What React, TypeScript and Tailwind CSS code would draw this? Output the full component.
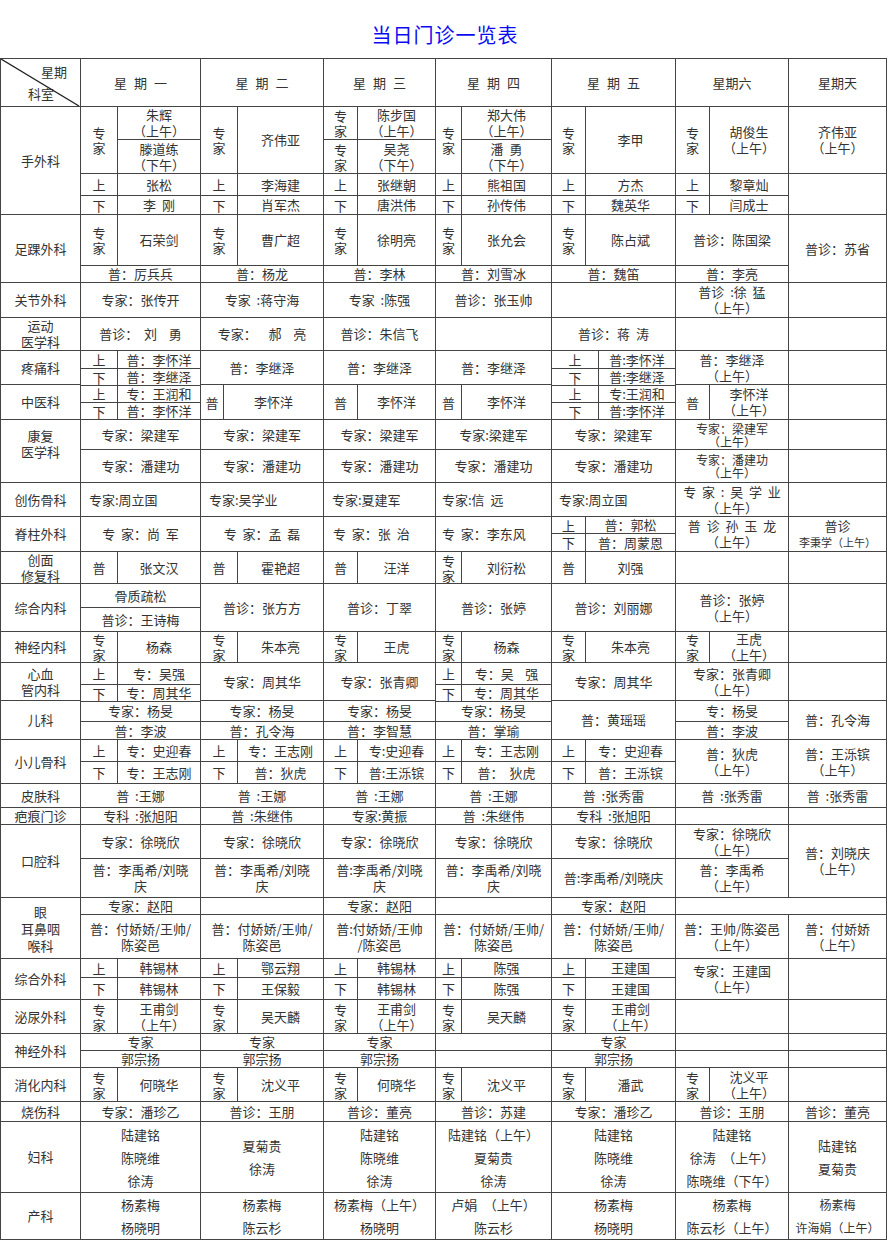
import React from 'react';

type Kids = { children?: React.ReactNode; className?: string };

// day column widths (Mon..Sun) and the narrow label column inside each day
const W = ['w-[120px]', 'w-[123px]', 'w-[112px]', 'w-[116px]', 'w-[124px]', 'w-[113px]', 'w-[98px]'];
const LW = ['w-[37px]', 'w-[37px]', 'w-[34px]', 'w-[26px]', 'w-[34px]', 'w-[34px]'];
const ZJ = '专\n家';
const AM = '（上午）';

function Box({ children, className = '' }: Kids) {
  const j = className.includes('justify-') ? '' : 'justify-center';
  return (
    <div className={`flex shrink-0 items-center ${j} border-r border-b border-[#444] text-center whitespace-pre-wrap ${className}`}>
      {children}
    </div>
  );
}

function Col({ d, w, children }: { d: number; w?: string; children?: React.ReactNode }) {
  return <div className={`flex h-full shrink-0 flex-col ${w ?? W[d]}`}>{children}</div>;
}

function Pair({ lw, h = 'flex-1', label, children, className = '' }: Kids & { lw: string; h?: string; label: string }) {
  return (
    <div className={`flex w-full shrink-0 ${h}`}>
      <Box className={`${lw} h-full leading-[15px]`}>{label}</Box>
      <Box className={`h-full flex-1 ${className}`}>{children}</Box>
    </div>
  );
}

// whole day in one cell
function T({ d, children, className = '' }: Kids & { d: number }) {
  return <Box className={`${W[d]} h-full ${className}`}>{children}</Box>;
}

// label | name
function ZN({ d, label = ZJ, lw, children }: Kids & { d: number; label?: string; lw?: string }) {
  return (
    <Col d={d}>
      <Pair lw={lw ?? LW[d]} h="h-full" label={label}>
        {children}
      </Pair>
    </Col>
  );
}

// 上 / 下 halves
function UD({ d, th, up, down, lw }: { d: number; th: string; up: React.ReactNode; down: React.ReactNode; lw?: string }) {
  const l = lw ?? LW[d];
  return (
    <Col d={d}>
      <Pair lw={l} h={th} label="上">{up}</Pair>
      <Pair lw={l} label="下">{down}</Pair>
    </Col>
  );
}

// two stacked cells
function S2({ d, th, up, down, className = '' }: { d: number; th: string; up?: React.ReactNode; down?: React.ReactNode; className?: string }) {
  return (
    <Col d={d}>
      <Box className={`w-full ${th} ${className}`}>{up}</Box>
      <Box className={`w-full flex-1 ${className}`}>{down}</Box>
    </Col>
  );
}

function Row({ h, name, nameClass = '', children }: { h: string; name: string; nameClass?: string; children?: React.ReactNode }) {
  return (
    <div className={`flex ${h}`}>
      <Box className={`h-full w-[80px] ${nameClass}`}>{name}</Box>
      {children}
    </div>
  );
}

export default function App() {
  return (
    <div className="min-h-[1259px] w-[890px] bg-white font-['Noto_Sans_CJK_SC',sans-serif] text-[13px] leading-[16px] text-[#333]">
      <div className="flex h-[58px] items-center justify-center pt-[12px] text-[20px] tracking-[1px] text-[#0b0bf2]">
        当日门诊一览表
      </div>

      <div className="w-[887px] border-t border-l border-[#444]">
        {/* header */}
        <div className="flex h-[48px]">
          <div className="relative flex h-full w-[80px] shrink-0 flex-col justify-between border-r border-b border-[#444] pt-[5px] pb-[4px]">
            <svg className="absolute inset-0 h-full w-full" viewBox="0 0 79 47" preserveAspectRatio="none">
              <line x1="0" y1="0" x2="78" y2="47" stroke="#222" strokeWidth="1.3" />
            </svg>
            <span className="self-end pr-[13px]">星期</span>
            <span className="self-start pl-[27px]">科室</span>
          </div>
          {['星期一', '星期二', '星期三', '星期四', '星期五'].map((t, i) => (
            <T key={t} d={i} className="pl-[7px] tracking-[7px]">
              {t}
            </T>
          ))}
          <T d={5}>星期六</T>
          <T d={6}>星期天</T>
        </div>

        {/* 手外科 */}
        <Row h="h-[108px]" name="手外科">
          <Col d={0}>
            <div className="flex h-[67px] w-full shrink-0">
              <Box className={`${LW[0]} h-full leading-[15px]`}>{ZJ}</Box>
              <div className="flex flex-1 flex-col">
                <Box className="h-[33px] w-full">{'朱辉\n（上午）'}</Box>
                <Box className="w-full flex-1">{'滕道练\n（下午）'}</Box>
              </div>
            </div>
            <Pair lw={LW[0]} h="h-[22px]" label="上">张松</Pair>
            <Pair lw={LW[0]} label="下">{'李  刚'}</Pair>
          </Col>
          <Col d={1}>
            <Pair lw={LW[1]} h="h-[67px]" label={ZJ}>齐伟亚</Pair>
            <Pair lw={LW[1]} h="h-[22px]" label="上">李海建</Pair>
            <Pair lw={LW[1]} label="下">肖军杰</Pair>
          </Col>
          <Col d={2}>
            <Pair lw={LW[2]} h="h-[33px]" label={ZJ}>{'陈步国\n（上午）'}</Pair>
            <Pair lw={LW[2]} h="h-[34px]" label={ZJ}>{'吴尧\n（下午）'}</Pair>
            <Pair lw={LW[2]} h="h-[22px]" label="上">张继朝</Pair>
            <Pair lw={LW[2]} label="下">唐洪伟</Pair>
          </Col>
          <Col d={3}>
            <div className="flex h-[67px] w-full shrink-0">
              <Box className={`${LW[3]} h-full leading-[15px]`}>{ZJ}</Box>
              <div className="flex flex-1 flex-col">
                <Box className="h-[33px] w-full">{'郑大伟\n（上午）'}</Box>
                <Box className="w-full flex-1">{'潘  勇\n（下午）'}</Box>
              </div>
            </div>
            <Pair lw={LW[3]} h="h-[22px]" label="上">熊祖国</Pair>
            <Pair lw={LW[3]} label="下">孙传伟</Pair>
          </Col>
          <Col d={4}>
            <Pair lw={LW[4]} h="h-[67px]" label={ZJ}>李甲</Pair>
            <Pair lw={LW[4]} h="h-[22px]" label="上">方杰</Pair>
            <Pair lw={LW[4]} label="下">魏英华</Pair>
          </Col>
          <Col d={5}>
            <Pair lw={LW[5]} h="h-[67px]" label={ZJ}>{'胡俊生\n（上午）'}</Pair>
            <Pair lw={LW[5]} h="h-[22px]" label="上">黎章灿</Pair>
            <Pair lw={LW[5]} label="下">闫成士</Pair>
          </Col>
          <Col d={6}>
            <Box className="h-[67px] w-full">{'齐伟亚\n（上午）'}</Box>
            <Box className="w-full flex-1" />
          </Col>
        </Row>

        {/* 足踝外科 */}
        <Row h="h-[68px]" name="足踝外科">
          {[
            ['石荣剑', '普：厉兵兵'],
            ['曹广超', '普：杨龙'],
            ['徐明亮', '普：李林'],
            ['张允会', '普：刘雪冰'],
            ['陈占斌', '普：魏笛'],
          ].map(([a, b], i) => (
            <Col key={a} d={i}>
              <Pair lw={LW[i]} h="h-[51px]" label={ZJ}>{a}</Pair>
              <Box className="w-full flex-1">{b}</Box>
            </Col>
          ))}
          <S2 d={5} th="h-[51px]" up="普诊：陈国梁" down="普：李亮" />
          <T d={6}>普诊：苏省</T>
        </Row>

        {/* 关节外科 */}
        <Row h="h-[35px]" name="关节外科">
          {['专家：张传开', '专家  :蒋守海', '专家  :陈强', '普诊：张玉帅', '', '普诊  :徐  猛\n（上午）', ''].map((t, i) => (
            <T key={i} d={i}>{t}</T>
          ))}
        </Row>

        {/* 运动医学科 */}
        <Row h="h-[33px]" name={'运动\n医学科'}>
          {['普诊：  刘    勇', '专家：    郝    亮', '普诊：朱信飞', '', '普诊：蒋  涛', '', ''].map((t, i) => (
            <T key={i} d={i}>{t}</T>
          ))}
        </Row>

        {/* 疼痛科 */}
        <Row h="h-[34px]" name="疼痛科">
          <UD d={0} th="h-[18px]" up="普：李怀洋" down="普：李继泽" />
          <T d={1}>普：李继泽</T>
          <T d={2}>普：李继泽</T>
          <T d={3}>普：李继泽</T>
          <UD d={4} th="h-[18px]" lw="w-[47px]" up="普:李怀洋" down="普:李继泽" />
          <T d={5}>{'普：李继泽\n（上午）'}</T>
          <T d={6} />
        </Row>

        {/* 中医科 */}
        <Row h="h-[35px]" name="中医科">
          <UD d={0} th="h-[18px]" up="专：王润和" down="普：李怀洋" />
          <ZN d={1} lw="w-[23px]" label="普">李怀洋</ZN>
          <ZN d={2} label="普">李怀洋</ZN>
          <ZN d={3} label="普">李怀洋</ZN>
          <UD d={4} th="h-[18px]" lw="w-[47px]" up="专:王润和" down="普:李怀洋" />
          <ZN d={5} label="普">{'李怀洋\n（上午）'}</ZN>
          <T d={6} />
        </Row>

        {/* 康复医学科 */}
        <Row h="h-[63px]" name={'康复\n医学科'} nameClass="pb-[14px]">
          {['专家：梁建军', '专家：梁建军', '专家：梁建军', '专家:梁建军', '专家：梁建军'].map((t, i) => (
            <S2 key={i} d={i} th="h-[30px]" up={t} down="专家：潘建功" />
          ))}
          <S2 d={5} th="h-[30px]" className="text-[12px] leading-[13px]" up={'专家：梁建军\n（上午）'} down={'专家：潘建功\n（上午）'} />
          <S2 d={6} th="h-[30px]" />
        </Row>

        {/* 创伤骨科 */}
        <Row h="h-[34px]" name="创伤骨科">
          <T d={0} className="justify-start pl-[8px]">专家:周立国</T>
          <T d={1} className="justify-start pl-[8px]">专家:吴学业</T>
          <T d={2} className="justify-start pl-[8px]">专家:夏建军</T>
          <T d={3} className="justify-start pl-[6px]">{'专家:信  远'}</T>
          <T d={4} className="justify-start pl-[7px]">专家:周立国</T>
          <T d={5}>{'专  家  :  吴  学  业\n（上午）'}</T>
          <T d={6} />
        </Row>

        {/* 脊柱外科 */}
        <Row h="h-[35px]" name="脊柱外科">
          <T d={0}>{'专  家：尚  军'}</T>
          <T d={1}>{'专  家：孟  磊'}</T>
          <T d={2} className="justify-start pl-[9px]">{'专  家：张  治'}</T>
          <T d={3} className="justify-start pl-[6px]">{'专  家：李东风'}</T>
          <UD d={4} th="h-[17px]" up="普：郭松" down="普：周蒙恩" />
          <T d={5}>{'普  诊  孙  玉  龙\n（上午）'}</T>
          <T d={6}>
            <span className="flex flex-col">
              <span>普诊</span>
              <span className="text-[11px]">李秉学（上午）</span>
            </span>
          </T>
        </Row>

        {/* 创面修复科 */}
        <Row h="h-[32px]" name={'创面\n修复科'}>
          <ZN d={0} label="普">张文汉</ZN>
          <ZN d={1} label="普">霍艳超</ZN>
          <ZN d={2} label="普">汪洋</ZN>
          <ZN d={3}>刘衍松</ZN>
          <ZN d={4} label="普">刘强</ZN>
          <T d={5} />
          <T d={6} />
        </Row>

        {/* 综合内科 */}
        <Row h="h-[48px]" name="综合内科">
          <S2 d={0} th="h-[24px]" up="骨质疏松" down="普诊：王诗梅" />
          <T d={1}>普诊：张方方</T>
          <T d={2}>普诊：丁翠</T>
          <T d={3}>普诊：张婷</T>
          <T d={4}>普诊：刘丽娜</T>
          <T d={5}>{'普诊：张婷\n（上午）'}</T>
          <T d={6} />
        </Row>

        {/* 神经内科 */}
        <Row h="h-[31px]" name="神经内科">
          {['杨森', '朱本亮', '王虎', '杨森', '朱本亮', '王虎\n（上午）'].map((t, i) => (
            <ZN key={i} d={i}>{t}</ZN>
          ))}
          <T d={6} />
        </Row>

        {/* 心血管内科 */}
        <Row h="h-[38px]" name={'心血\n管内科'}>
          <UD d={0} th="h-[22px]" up="专：吴强" down="专：周其华" />
          <T d={1}>专家：周其华</T>
          <T d={2}>专家：张青卿</T>
          <UD d={3} th="h-[22px]" up={'专：吴    强'} down="专：周其华" />
          <T d={4}>专家：周其华</T>
          <T d={5}>{'专家：张青卿\n（上午）'}</T>
          <T d={6} />
        </Row>

        {/* 儿科 */}
        <Row h="h-[39px]" name="儿科">
          <S2 d={0} th="h-[21px]" up="专家：杨旻" down="普：李波" />
          <S2 d={1} th="h-[21px]" up="专家：杨旻" down="普：孔令海" />
          <S2 d={2} th="h-[21px]" up="专家：杨旻" down="普：李智慧" />
          <S2 d={3} th="h-[21px]" up="专家：杨旻" down="普：掌瑜" />
          <T d={4}>普：黄瑶瑶</T>
          <S2 d={5} th="h-[21px]" up="专：杨旻" down="普：李波" />
          <T d={6}>普：孔令海</T>
        </Row>

        {/* 小儿骨科 */}
        <Row h="h-[44px]" name="小儿骨科">
          <UD d={0} th="h-[22px]" up="专：史迎春" down="专：王志刚" />
          <UD d={1} th="h-[22px]" up="专：王志刚" down="普：狄虎" />
          <UD d={2} th="h-[22px]" up="专:史迎春" down="普:王泺镔" />
          <UD d={3} th="h-[22px]" up="专：王志刚" down={'普：  狄虎'} />
          <UD d={4} th="h-[22px]" up="专：史迎春" down="普：王泺镔" />
          <T d={5}>{'普：狄虎\n（上午）'}</T>
          <T d={6}>{'普：王泺镔\n（上午）'}</T>
        </Row>

        {/* 皮肤科 */}
        <Row h="h-[24px]" name="皮肤科">
          {['普  :王娜', '普  :王娜', '普  :王娜', '普  :王娜', '普  :张秀雷', '普  :张秀雷', '普  :张秀雷'].map((t, i) => (
            <T key={i} d={i}>{t}</T>
          ))}
        </Row>

        {/* 疤痕门诊 */}
        <Row h="h-[17px]" name="疤痕门诊">
          {['专科  :张旭阳', '普  :朱继伟', '专家:黄振', '普  :朱继伟', '专科  :张旭阳', '', ''].map((t, i) => (
            <T key={i} d={i}>{t}</T>
          ))}
        </Row>

        {/* 口腔科 */}
        <Row h="h-[73px]" name="口腔科">
          <S2 d={0} th="h-[34px]" up="专家：徐晓欣" down={'普：李禹希/刘晓\n庆'} />
          <S2 d={1} th="h-[34px]" up="专家：徐晓欣" down={'普：李禹希/刘晓\n庆'} />
          <S2 d={2} th="h-[34px]" up="专家：徐晓欣" down={'普:李禹希/刘晓\n庆'} />
          <S2 d={3} th="h-[34px]" up="专家：徐晓欣" down={'普：李禹希/刘晓\n庆'} />
          <S2 d={4} th="h-[34px]" up="专家：徐晓欣" down="普:李禹希/刘晓庆" />
          <S2 d={5} th="h-[34px]" up={'专家：徐晓欣\n' + AM} down={'普：李禹希\n' + AM} />
          <T d={6}>{'普：刘晓庆\n' + AM}</T>
        </Row>

        {/* 眼耳鼻咽喉科 */}
        <Row h="h-[61px]" name={'眼\n耳鼻咽\n喉科'} nameClass="leading-[17px]">
          <S2 d={0} th="h-[17px]" up="专家：赵阳" down={'普：付娇娇/王帅/\n陈姿邑'} />
          <S2 d={1} th="h-[17px]" down={'普：付娇娇/王帅/\n陈姿邑'} />
          <S2 d={2} th="h-[17px]" up="专家：赵阳" down={'普:付娇娇/王帅\n/陈姿邑'} />
          <S2 d={3} th="h-[17px]" down={'普：付娇娇/王帅/\n陈姿邑'} />
          <S2 d={4} th="h-[17px]" up="专家：赵阳" down={'普：付娇娇/王帅/\n陈姿邑'} />
          <Col d={5} w="w-[211px]">
            <Box className="h-[17px] w-full" />
            <div className="flex w-full flex-1">
              <Box className={`${W[5]} h-full`}>{'普：王帅/陈姿邑\n' + AM}</Box>
              <Box className={`${W[6]} h-full`}>{'普：付娇娇\n' + AM}</Box>
            </div>
          </Col>
        </Row>

        {/* 综合外科 */}
        <Row h="h-[41px]" name="综合外科">
          <UD d={0} th="h-[19px]" up="韩锡林" down="韩锡林" />
          <UD d={1} th="h-[19px]" up="鄂云翔" down="王保毅" />
          <UD d={2} th="h-[19px]" up="韩锡林" down="韩锡林" />
          <UD d={3} th="h-[19px]" up="陈强" down="陈强" />
          <UD d={4} th="h-[19px]" up="王建国" down="王建国" />
          <T d={5}>{'专家：王建国\n' + AM}</T>
          <T d={6} />
        </Row>

        {/* 泌尿外科 */}
        <Row h="h-[34px]" name="泌尿外科">
          {['王甫剑\n（上午）', '吴天麟', '王甫剑\n（上午）', '吴天麟', '王甫剑\n（上午）'].map((t, i) => (
            <ZN key={i} d={i}>{t}</ZN>
          ))}
          <T d={5} />
          <T d={6} />
        </Row>

        {/* 神经外科 */}
        <Row h="h-[34px]" name="神经外科">
          <S2 d={0} th="h-[17px]" up="专家" down="郭宗扬" />
          <S2 d={1} th="h-[17px]" up="专家" down="郭宗扬" />
          <S2 d={2} th="h-[17px]" up="专家" down="郭宗扬" />
          <S2 d={3} th="h-[17px]" />
          <S2 d={4} th="h-[17px]" up="专家" down="郭宗扬" />
          <S2 d={5} th="h-[17px]" />
          <S2 d={6} th="h-[17px]" />
        </Row>

        {/* 消化内科 */}
        <Row h="h-[34px]" name="消化内科">
          {['何晓华', '沈义平', '何晓华', '沈义平', '潘武', '沈义平\n（上午）'].map((t, i) => (
            <ZN key={i} d={i}>{t}</ZN>
          ))}
          <T d={6} />
        </Row>

        {/* 烧伤科 */}
        <Row h="h-[20px]" name="烧伤科">
          {['专家：潘珍乙', '普诊：王朋', '普诊：董亮', '普诊：苏建', '专家：潘珍乙', '普诊：王朋', '普诊：董亮'].map((t, i) => (
            <T key={i} d={i}>{t}</T>
          ))}
        </Row>

        {/* 妇科 */}
        <Row h="h-[71px]" name="妇科">
          {[
            '陆建铭\n陈晓维\n徐涛',
            '夏菊贵\n徐涛',
            '陆建铭\n陈晓维\n徐涛',
            '陆建铭（上午）\n夏菊贵\n徐涛',
            '陆建铭\n陈晓维\n徐涛',
            '陆建铭\n徐涛　（上午）\n陈晓维（下午）',
            '陆建铭\n夏菊贵',
          ].map((t, i) => (
            <T key={i} d={i} className="leading-[23px]">{t}</T>
          ))}
        </Row>

        {/* 产科 */}
        <Row h="h-[47px]" name="产科">
          {[
            '杨素梅\n杨晓明',
            '杨素梅\n陈云杉',
            '杨素梅（上午）\n杨晓明',
            '卢娟　（上午）\n陈云杉',
            '杨素梅\n杨晓明',
            '杨素梅\n陈云杉（上午）',
          ].map((t, i) => (
            <T key={i} d={i} className="leading-[23px]">{t}</T>
          ))}
          <T d={6} className="text-[12px] leading-[23px]">{'杨素梅\n许海娟（上午）'}</T>
        </Row>
      </div>
    </div>
  );
}
